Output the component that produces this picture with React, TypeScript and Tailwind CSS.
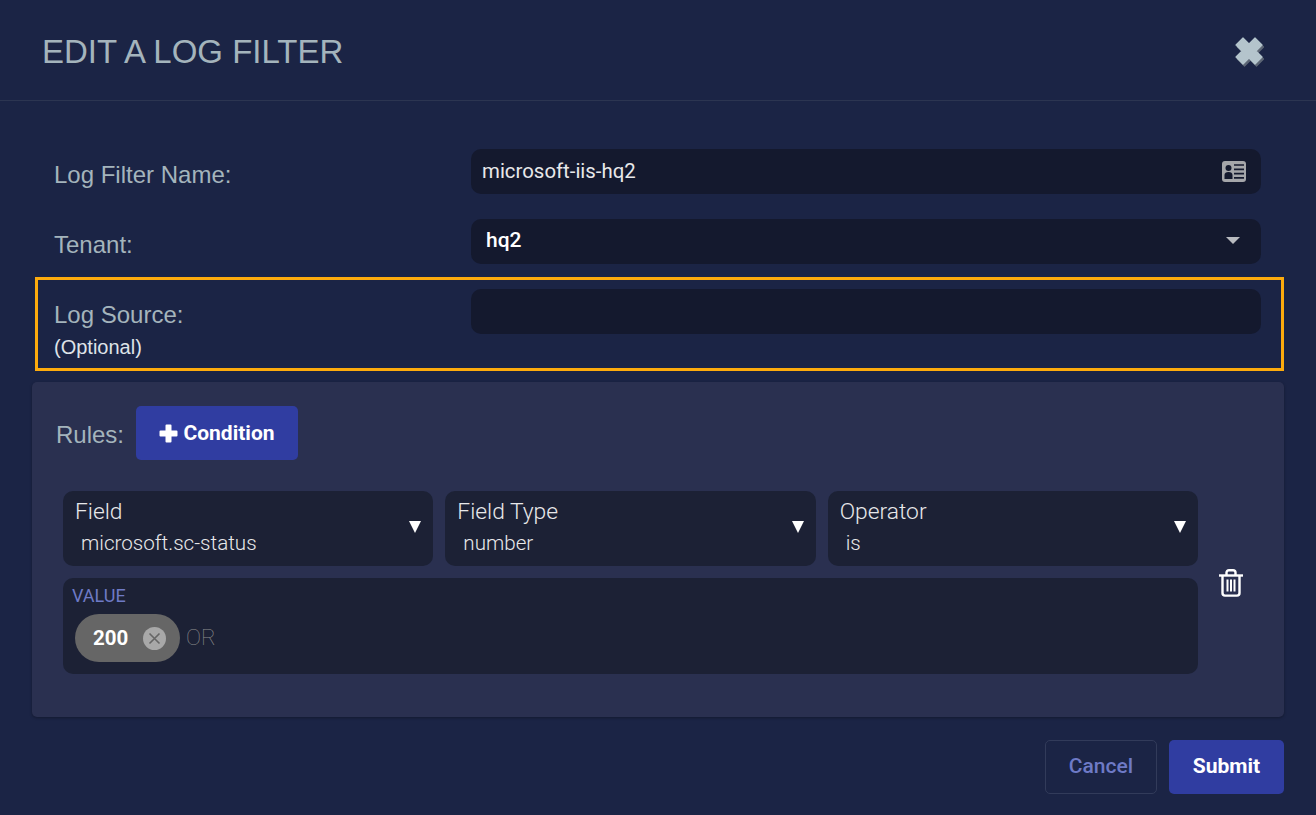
import React from 'react';

const sans = "font-['Liberation_Sans',Arial,sans-serif]";
const roboto = "font-['Roboto',sans-serif]";

const CloseIcon = () => {
  const d = 'M2 9 9 2 15 8 21 2 28 9 22 15 28 21 21 28 15 22 9 28 2 21 8 15Z';
  return (
    <svg width="32" height="32" viewBox="0 0 32 32">
      <path d={d} fill="#5d6675" stroke="#5d6675" strokeWidth="1.2" strokeLinejoin="round" transform="translate(1.5 2)" />
      <path d={d} fill="#b4c4cc" stroke="#b4c4cc" strokeWidth="1.2" strokeLinejoin="round" />
    </svg>
  );
};

const CardIcon = () => (
  <svg width="24" height="21" viewBox="0 0 24 21">
    <rect width="24" height="21" rx="3" fill="#a5a6aa" />
    <circle cx="6.5" cy="7" r="3" fill="#14192e" />
    <path d="M2.5 18v-4c0-2 1.5-3 4-3s4 1 4 3v4Z" fill="#14192e" />
    <path d="M12 4h10M12 8.3h10M12 12.6h10M12 16.9h10" stroke="#14192e" strokeWidth="1.7" />
  </svg>
);

const TrashIcon = () => (
  <svg width="24" height="28" viewBox="0 0 24 28" fill="none" stroke="#fff" strokeWidth="2.4">
    <path d="M0 6.5h24" />
    <path d="M7.5 6V3.5C7.5 2 8.5 1.2 10 1.2h4c1.5 0 2.5 0.8 2.5 2.3V6" />
    <path d="M3.5 6.5V24c0 1.5 1 2.6 2.5 2.6h12c1.5 0 2.5-1.1 2.5-2.6V6.5" />
    <path d="M8.5 10.5v12M12 10.5v12M15.5 10.5v12" strokeWidth="2" />
  </svg>
);

const PlusIcon = () => (
  <svg width="19" height="19" viewBox="0 0 19 19">
    <path d="M6.5 1.5a1 1 0 0 1 1-1h4a1 1 0 0 1 1 1v5h5a1 1 0 0 1 1 1v4a1 1 0 0 1-1 1h-5v5a1 1 0 0 1-1 1h-4a1 1 0 0 1-1-1v-5h-5a1 1 0 0 1-1-1v-4a1 1 0 0 1 1-1h5Z" fill="#fff" />
  </svg>
);

const FormRow: React.FC<{ label: string; children?: React.ReactNode; note?: string }> = ({ label, children, note }) => (
  <div className="flex">
    <div className={`w-[417px] shrink-0 ${sans}`}>
      <div className="pt-[12px] text-[24px] leading-[28px] text-[#a4b4bc]">{label}</div>
      {note && <div className="mt-[6px] text-[20px] leading-[24px] text-[#dfe3e8]">{note}</div>}
    </div>
    {children}
  </div>
);

const RuleSelect: React.FC<{ label: string; value: string }> = ({ label, value }) => (
  <div className={`relative h-[75px] flex-1 rounded-[10px] bg-[#1c2135] pl-3 pt-[7px] ${roboto}`}>
    <div className="text-[22.8px] leading-[28px] font-light text-[#e8e8ea]">{label}</div>
    <div className="mt-[4px] pl-[6px] text-[20.6px] leading-[26px] font-light text-[#e8e8ea]">{value}</div>
    <span className="absolute right-[12px] top-[30px] h-0 w-0 border-x-[6px] border-t-[12px] border-x-transparent border-t-white" />
  </div>
);

export default function App() {
  return (
    <div className="flex h-[815px] w-full flex-col overflow-hidden bg-[#1b2445]">
      {/* Header */}
      <div className="flex h-[101px] shrink-0 items-center justify-between border-b border-[#2c3551] pl-[42px] pr-[50px]">
        <h1 className={`pt-[2px] text-[33px] leading-none text-[#a4b4bc] ${sans}`}>EDIT A LOG FILTER</h1>
        <div className="pt-[4px]">
          <CloseIcon />
        </div>
      </div>

      {/* Form */}
      <div className="flex flex-col px-[32px] pt-[48px]">
        <div className="flex flex-col gap-[25px] pl-[22px] pr-[23px]">
          <FormRow label="Log Filter Name:">
            <div className={`flex h-[45px] flex-1 items-center justify-between rounded-[10px] bg-[#14192e] pl-[11px] pr-[15px] text-[20.4px] text-[#e8e8ea] ${roboto}`}>
              <span className="pb-[1px]">microsoft-iis-hq2</span>
              <CardIcon />
            </div>
          </FormRow>
          <FormRow label="Tenant:">
            <div className={`flex h-[45px] flex-1 items-center justify-between rounded-[10px] bg-[#14192e] pl-[15px] pr-[21px] text-[21px] font-medium text-white ${roboto}`}>
              <span className="pb-[1px]">hq2</span>
              <span className="mb-[2px] h-0 w-0 border-x-[7px] border-t-[7px] border-x-transparent border-t-[#b9bbc0]" />
            </div>
          </FormRow>
        </div>

        {/* Highlighted source row */}
        <div className="mt-[13px] ml-[3px] h-[94px] border-[3px] border-[#fdab0d] pl-[16px] pr-[20px] pt-[9px]">
          <FormRow label="Log Source:" note="(Optional)">
            <div className="h-[45px] flex-1 rounded-[10px] bg-[#14192e]" />
          </FormRow>
        </div>

        {/* Rules */}
        <div className="mt-[11px] h-[335px] rounded-[5px] bg-[#2a3050] pl-[31px] pr-[86px] pt-[24px] shadow-[0_1px_3px_rgba(0,0,0,0.3)]">
          <div className="-ml-[7px] flex items-center">
            <span className={`w-[80px] pt-[4px] text-[24px] text-[#a4b4bc] ${sans}`}>Rules:</span>
            <button className={`flex h-[54px] w-[162px] items-center justify-center gap-[5px] rounded-[5px] bg-[#303da1] text-[21px] font-bold text-white ${roboto}`}>
              <PlusIcon />
              <span className="pt-[1px]">Condition</span>
            </button>
          </div>

          <div className="relative mt-[31px] flex flex-col gap-[12px]">
            <div className="flex gap-[12px]">
              <RuleSelect label="Field" value="microsoft.sc-status" />
              <RuleSelect label="Field Type" value="number" />
              <RuleSelect label="Operator" value="is" />
            </div>
            <div className={`h-[96px] rounded-[10px] bg-[#1c2135] pl-[9px] pt-[8px] ${roboto}`}>
              <div className="text-[18px] leading-[20px] text-[#6e7ac6]">VALUE</div>
              <div className="mt-[8px] ml-[3px] flex items-center gap-[6px]">
                <div className="flex h-[48px] w-[105px] items-center rounded-[24px] bg-[#666666] pl-[18px] text-[20.5px] font-bold text-white">
                  <span>200</span>
                  <svg width="23" height="23" viewBox="0 0 23 23" className="ml-[15px]">
                    <circle cx="11.5" cy="11.5" r="11.5" fill="#a8a8a8" />
                    <path d="M6.5 6.5 16.5 16.5M16.5 6.5 6.5 16.5" stroke="#666666" strokeWidth="1.6" />
                  </svg>
                </div>
                <span className="text-[22.5px] font-thin text-[#8f8f8f]">OR</span>
              </div>
            </div>
            <div className="absolute -right-[45px] top-[78px]">
              <TrashIcon />
            </div>
          </div>
        </div>

        {/* Footer */}
        <div className={`mt-[23px] flex justify-end gap-[12px] text-[21px] ${roboto}`}>
          <button className="h-[54px] w-[112px] rounded-[5px] border border-[#323b5a] font-medium text-[#6e7ac6]">Cancel</button>
          <button className="h-[54px] w-[115px] rounded-[5px] bg-[#303da1] font-bold text-white">Submit</button>
        </div>
      </div>
    </div>
  );
}
